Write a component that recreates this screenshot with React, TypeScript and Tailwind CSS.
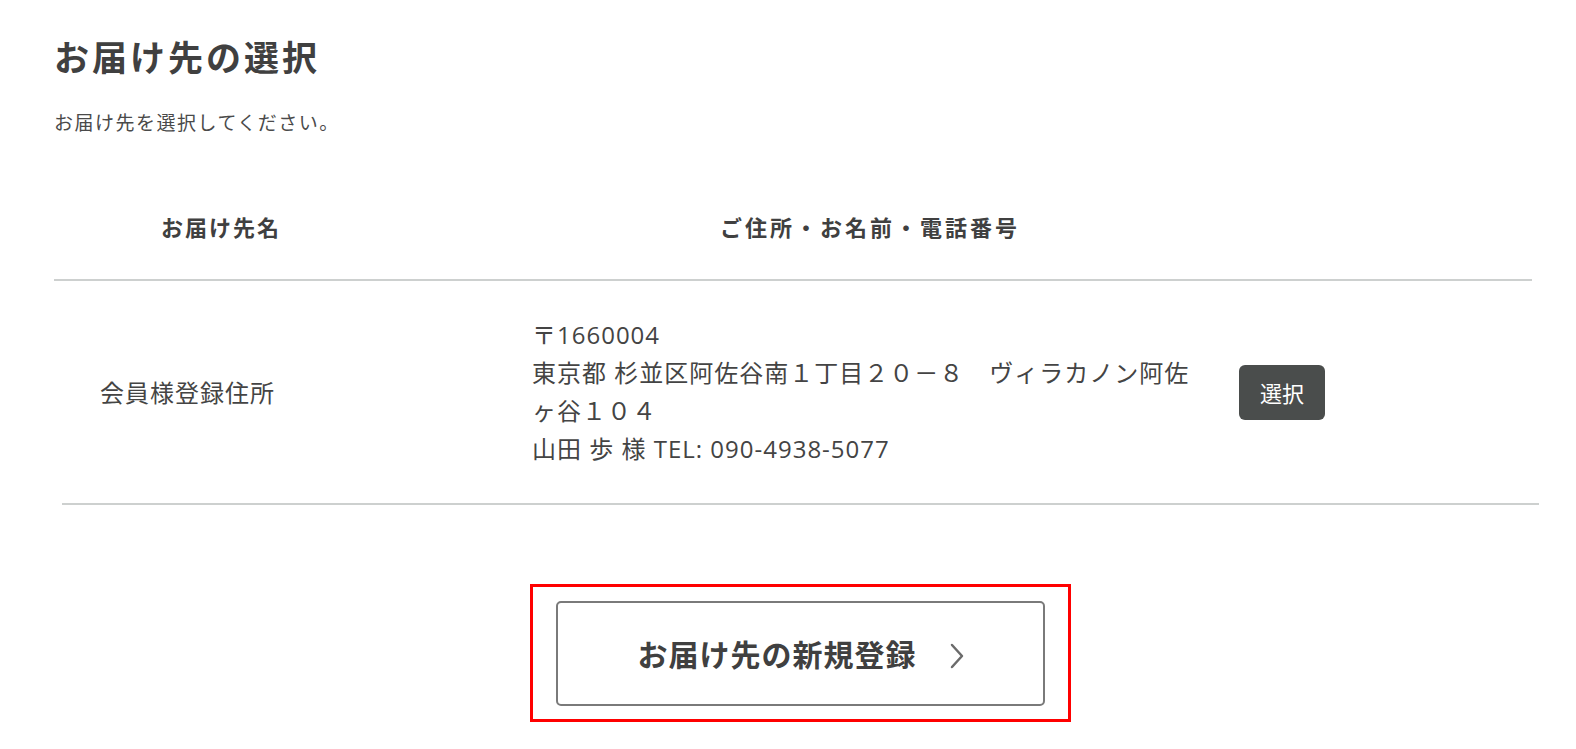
import React from "react";

const font = { fontFamily: '"Noto Sans CJK JP", "Noto Sans", sans-serif' };
const addrFont = { fontFamily: '"Open Sans", "Noto Sans CJK JP", sans-serif' };

export default function App() {
  return (
    <div
      className="min-h-[749px] w-[1576px] bg-white text-[#3f3f3f] pl-[54px] pt-[34px]"
      style={font}
    >
      <h1 className="text-[35px] leading-[44px] font-bold tracking-[3px] text-[#404040]">
        お届け先の選択
      </h1>
      <p className="mt-[30px] text-[19px] leading-[28px] tracking-[1.5px] text-[#4a4a4a]">
        お届け先を選択してください。
      </p>

      <div className="w-[1478px]">
        <div className="mt-[75px] flex text-[22px] leading-[30px] font-bold text-[#404040]">
          <div className="w-[334px] text-center tracking-[2px]">お届け先名</div>
          <div className="w-[964px] text-center tracking-[3px]">ご住所・お名前・電話番号</div>
        </div>
        <div className="mt-[38px] h-[2px] bg-[#cdd0cf]" />

        <div className="flex items-center py-[35px] text-[24px] text-[#444]">
          <div className="w-[478px] pl-[46px] leading-[38px] tracking-[1px]" style={font}>
            会員様登録住所
          </div>
          <div className="w-[668px] leading-[38px] tracking-[1px]" style={addrFont}>
            <div>〒1660004</div>
            <div>東京都 杉並区阿佐谷南１丁目２０－８　ヴィラカノン阿佐ヶ谷１０４</div>
            <div>山田 歩 様 TEL: 090-4938-5077</div>
          </div>
          <button className="ml-[39px] flex h-[55px] w-[86px] items-center justify-center rounded-[6px] bg-[#4a4d4c] text-[22px] text-white">
            選択
          </button>
        </div>
      </div>
      <div className="ml-[8px] h-[2px] w-[1477px] bg-[#cdd0cf]" />

      <div className="ml-[476px] mt-[79px] w-[541px] border-[3px] border-[#ff0000] px-[23px] pt-[14px] pb-[13px]">
        <button className="flex h-[105px] w-[489px] items-center justify-center gap-[33px] rounded-[5px] border-2 border-[#7a7a7a] bg-white">
          <span className="text-[30px] font-bold tracking-[1px] text-[#404040]">お届け先の新規登録</span>
          <svg width="14" height="26" viewBox="0 0 14 26" fill="none" className="mt-[4px]">
            <polyline points="2,2 12,13 2,24" stroke="#6b6b6b" strokeWidth="2.5" strokeLinecap="round" strokeLinejoin="round" fill="none" />
          </svg>
        </button>
      </div>
    </div>
  );
}
